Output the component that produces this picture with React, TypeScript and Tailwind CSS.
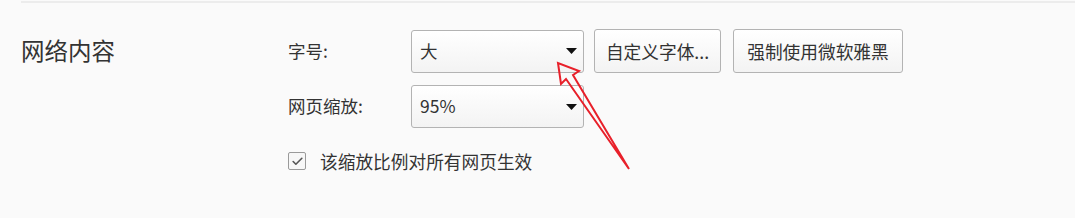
import { Check } from "lucide-react";

const font = { fontFamily: '"Noto Sans CJK SC", "Noto Sans", sans-serif' };

function Select({ value }: { value: string }) {
  return (
    <div className="flex h-[43px] w-[173px] items-center justify-between rounded-[3px] border border-[#b3b3b3] bg-gradient-to-b from-white to-[#f3f3f3] pl-[8px] pr-[6px] text-[17.5px] text-[#333]">
      <span>{value}</span>
      <svg width="11" height="6" viewBox="0 0 11 6">
        <path d="M0 0h11L5.5 6z" fill="#111" />
      </svg>
    </div>
  );
}

function Button({ children, className }: { children: React.ReactNode; className: string }) {
  return (
    <button
      className={`flex h-[44px] items-center justify-center rounded-[3px] border border-[#b3b3b3] bg-gradient-to-b from-white to-[#f3f3f3] text-[17.7px] text-[#333] ${className}`}
    >
      {children}
    </button>
  );
}

export default function App() {
  return (
    <div className="relative h-[218px] w-[1075px] overflow-hidden bg-[#fafafa]" style={font}>
      <div className="ml-[21px] mt-[1px] border-t-2 border-[#ececec]" />

      <div className="flex pl-[21px] pt-[26px]">
        <div className="w-[267px] pt-[4px] text-[23.5px] leading-[34px] text-[#333]">网络内容</div>

        <div className="flex flex-col">
          <div className="flex items-center">
            <div className="w-[123px] text-[17.5px] text-[#333]">字号:</div>
            <Select value="大" />
            <div className="ml-[10px] flex gap-[12px]">
              <Button className="w-[127px]">自定义字体...</Button>
              <Button className="w-[170px]">强制使用微软雅黑</Button>
            </div>
          </div>

          <div className="mt-[12px] flex items-center">
            <div className="w-[123px] text-[17.5px] text-[#333]">网页缩放:</div>
            <Select value="95%" />
          </div>

          <div className="mt-[20px] flex items-center gap-[14px]">
            <div className="flex h-[18px] w-[18px] items-center justify-center rounded-[2px] border border-[#9a9a9a] bg-[#f7f7f7]">
              <Check size={13} strokeWidth={3} className="text-[#555]" />
            </div>
            <span className="text-[17.7px] text-[#333]">该缩放比例对所有网页生效</span>
          </div>
        </div>
      </div>

      <svg className="pointer-events-none absolute left-0 top-0" width="1075" height="218">
        <path
          d="M558 63 L561 84 L566 79 L629 169 L573 75 L579 71 Z"
          fill="none"
          stroke="#e8202a"
          strokeWidth="2"
          strokeLinejoin="miter"
        />
      </svg>
    </div>
  );
}
